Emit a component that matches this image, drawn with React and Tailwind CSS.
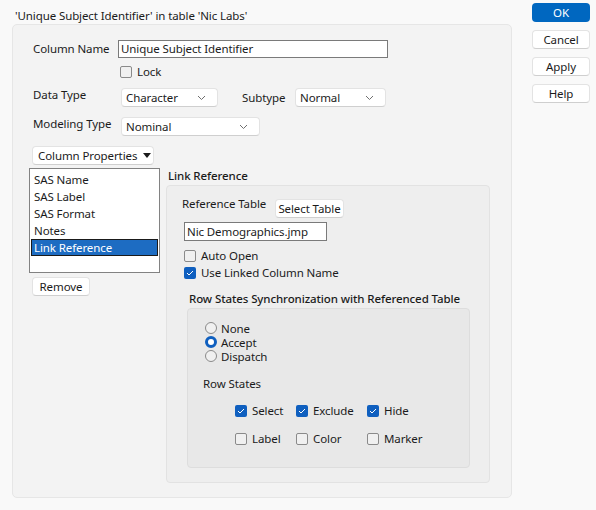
import React from 'react';

const font = { fontFamily: '"Noto Sans", "Open Sans", sans-serif' };

function Chevron() {
  return (
    <svg width="9" height="6" viewBox="0 0 9 6" className="shrink-0">
      <polyline points="1,1 4.5,4.5 8,1" fill="none" stroke="#6f6f6f" strokeWidth="1" />
    </svg>
  );
}

function Dropdown({ value, width }) {
  return (
    <div className={`flex items-center justify-between h-[19px] bg-white border border-[#e3e3e3] border-b-[#cfcfcf] rounded-[4px] pl-[4px] pr-[11px] ${width}`}>
      <span>{value}</span>
      <Chevron />
    </div>
  );
}

function Check({ checked, label }) {
  return (
    <div className="flex items-center h-[17px]">
      {checked ? (
        <span className="w-[12px] h-[12px] rounded-[2px] bg-[#0f5fbf] flex items-center justify-center shrink-0">
          <svg width="8" height="6" viewBox="0 0 8 6">
            <polyline points="1,3 3,5 7,1" fill="none" stroke="#fff" strokeWidth="1" />
          </svg>
        </span>
      ) : (
        <span className="w-[12px] h-[12px] rounded-[2px] border border-[#8a8a8a] bg-[#f0f0f0] shrink-0" />
      )}
      <span className="ml-[5px]">{label}</span>
    </div>
  );
}

function Radio({ checked, label }) {
  return (
    <div className="flex items-center h-[14px] leading-[13px]">
      {checked ? (
        <span className="w-[12px] h-[12px] rounded-full border-[3px] border-[#0f5fbf] bg-white shrink-0" />
      ) : (
        <span className="w-[12px] h-[12px] rounded-full border border-[#8a8a8a] bg-[#f0f0f0] shrink-0" />
      )}
      <span className="ml-[4px]">{label}</span>
    </div>
  );
}

function Btn({ children, className = '' }) {
  return (
    <div className={`h-[19px] flex items-center justify-center bg-white border border-[#e3e3e3] border-b-[#cfcfcf] rounded-[4px] ${className}`}>
      {children}
    </div>
  );
}

export default function App() {
  return (
    <div style={font} className="w-[596px] h-[510px] bg-[#f9f9f9] text-[11.5px] tracking-[-0.1px] leading-[14px] text-[#1b1b1b] whitespace-nowrap flex">
      {/* left: title + main panel */}
      <div className="pl-[12px] pt-[9px]">
        <div className="h-[15px] pl-[3px]">'Unique Subject Identifier' in table 'Nic Labs'</div>
        <div className="w-[500px] h-[474px] bg-[#f3f3f3] border border-[#e6e6e6] rounded-[5px]">
          <div className="flex items-center mt-[15px] ml-[20px]">
            <span className="w-[85px]">Column Name</span>
            <div className="w-[270px] h-[18px] bg-white border border-[#7a7a7a] pl-[2px] flex items-center">Unique Subject Identifier</div>
          </div>
          <div className="flex items-center ml-[107px] mt-[8px] h-[12px]">
            <span className="w-[12px] h-[12px] rounded-[2px] border border-[#8a8a8a] bg-[#f0f0f0]" />
            <span className="ml-[5px]">Lock</span>
          </div>
          <div className="flex items-start ml-[20px] mt-[10px]">
            <span className="w-[88px]">Data Type</span>
            <Dropdown value="Character" width="w-[97px]" />
            <span className="ml-[24px] w-[53px] pt-[3px]">Subtype</span>
            <Dropdown value="Normal" width="w-[91px]" />
          </div>
          <div className="flex items-start ml-[20px] mt-[10px]">
            <span className="w-[88px]">Modeling Type</span>
            <Dropdown value="Nominal" width="w-[139px]" />
          </div>
          <div className="ml-[19px] mt-[10px]">
            <Btn className="w-[122px] !justify-start pl-[5px] gap-[6px]">
              <span>Column Properties</span>
              <svg width="8" height="5" viewBox="0 0 8 5"><polygon points="0,0 8,0 4,5" fill="#1b1b1b" /></svg>
            </Btn>
          </div>

          <div className="flex mt-[3px] ml-[16px]">
            {/* property list */}
            <div className="w-[131px]">
              <div className="h-[105px] bg-white border border-[#828282] pt-[2px] px-[1px]">
                {['SAS Name', 'SAS Label', 'SAS Format', 'Notes'].map((t) => (
                  <div key={t} className="h-[17px] leading-[17px] pl-[3px]">{t}</div>
                ))}
                <div className="h-[17px] leading-[15px] pl-[2px] bg-[#1d6cc2] border border-[#1a1a1a] text-white">Link Reference</div>
              </div>
              <Btn className="w-[58px] mt-[4px] ml-[3px]">Remove</Btn>
            </div>

            {/* link reference */}
            <div className="ml-[6px]">
              <div className="h-[17px] leading-[16px] ml-[2px] font-medium">Link Reference</div>
              <div className="w-[324px] h-[298px] bg-[#eeeeee] border border-[#e2e2e2] rounded-[4px]">
                <div className="flex items-start mt-[11px] ml-[15px]">
                  <span className="w-[93px]">Reference Table</span>
                  <Btn className="w-[69px] mt-[2px]">Select Table</Btn>
                </div>
                <div className="w-[143px] h-[19px] bg-white border border-[#7a7a7a] ml-[17px] mt-[4px] pl-[2px] flex items-center">Nic Demographics.jmp</div>
                <div className="ml-[17px] mt-[6px]">
                  <Check label="Auto Open" />
                  <Check checked label="Use Linked Column Name" />
                </div>
                <div className="ml-[22px] mt-[10px] h-[16px] leading-[16px] font-medium">Row States Synchronization with Referenced Table</div>
                <div className="w-[283px] h-[160px] ml-[20px] mt-[1px] bg-[#e8e8e8] border border-[#dddddd] rounded-[4px]">
                  <div className="pl-[17px] pt-[12px]">
                    <Radio label="None" />
                    <Radio checked label="Accept" />
                    <Radio label="Dispatch" />
                  </div>
                  <div className="ml-[15px] mt-[14px]">Row States</div>
                  <div className="grid grid-cols-[61px_71px_90px] gap-y-[11px] ml-[47px] mt-[11px]">
                    <Check checked label="Select" />
                    <Check checked label="Exclude" />
                    <Check checked label="Hide" />
                    <Check label="Label" />
                    <Check label="Color" />
                    <Check label="Marker" />
                  </div>
                </div>
              </div>
            </div>
          </div>
        </div>
      </div>

      {/* right: dialog buttons */}
      <div className="ml-[20px] pt-[3px] flex flex-col gap-[8px]">
        <div className="w-[58px] h-[19px] flex items-center justify-center bg-[#0067c0] text-white rounded-[4px]">OK</div>
        <Btn className="w-[58px]">Cancel</Btn>
        <Btn className="w-[58px]">Apply</Btn>
        <Btn className="w-[58px]">Help</Btn>
      </div>
    </div>
  );
}
